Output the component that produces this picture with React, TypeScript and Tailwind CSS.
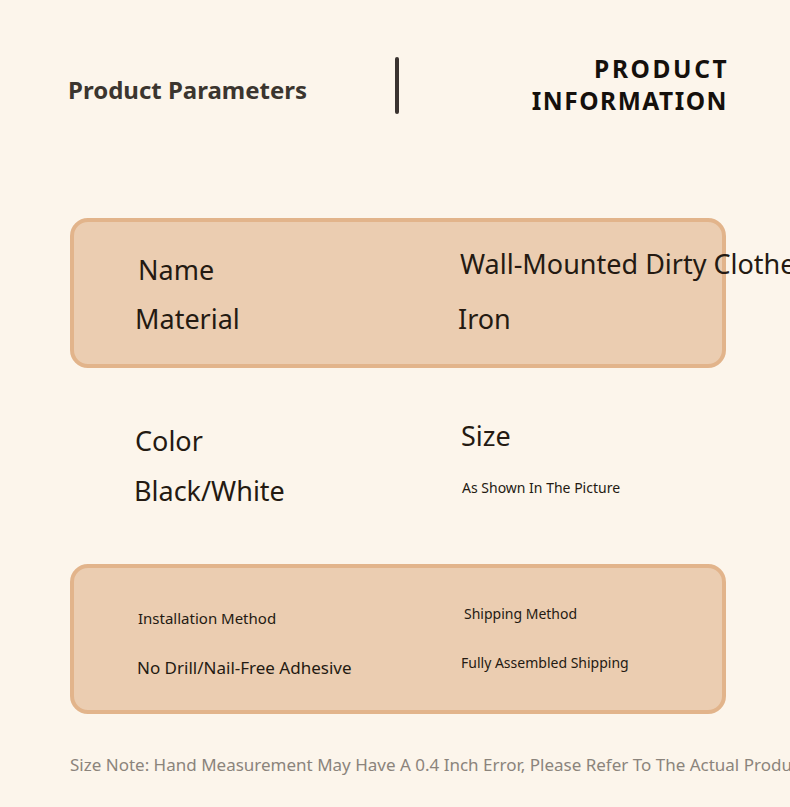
export default function App() {
  return (
    <div
      className="w-[790px] h-[807px] overflow-hidden bg-[#fcf5eb] text-[#241a12]"
      style={{ fontFamily: '"Noto Sans", "Open Sans", sans-serif' }}
    >
      {/* header */}
      <header className="flex items-center h-[170px] pl-[68px] pr-[62px]">
        <div className="flex items-center w-full">
          <h1 className="w-[327px] text-[24px] font-bold text-[#3b352f] mt-[10px]">
            Product Parameters
          </h1>
          <div className="w-[4px] h-[57px] rounded-full bg-[#3a3330]" />
          <div className="flex-1 flex flex-col items-end text-[24.5px] leading-[32px] font-bold text-[#15100c]">
            <div className="tracking-[2.6px] -mr-[1.3px]">PRODUCT</div>
            <div className="tracking-[1.5px]">INFORMATION</div>
          </div>
        </div>
      </header>

      <main className="px-[70px] mt-[48px]">
        {/* name + material card */}
        <section className="w-[656px] h-[150px] rounded-[18px] border-[4px] border-[#e2b48b] bg-[#ebcdb1] pt-[23px]">
          <div className="grid grid-cols-[386px_1fr] text-[27px]">
            <div className="h-[50px] flex items-center pl-[64px]">Name</div>
            <div className="h-[50px] flex items-center whitespace-nowrap -mt-[6px]">
              Wall-Mounted Dirty Clothes Basket
            </div>
            <div className="h-[50px] flex items-center pl-[61px] -mt-[1px]">Material</div>
            <div className="h-[50px] flex items-center -ml-[2px] -mt-[1px]">Iron</div>
          </div>
        </section>

        {/* color + size */}
        <section className="w-[656px] pt-[48px] h-[196px]">
          <div className="grid grid-cols-[390px_1fr] text-[27px]">
            <div className="h-[50px] flex items-center pl-[65px]">Color</div>
            <div className="h-[50px] flex items-center -mt-[5px] pl-[1px]">Size</div>
            <div className="h-[50px] flex items-center pl-[64px]">Black/White</div>
            <div className="h-[50px] flex items-center text-[14px] -mt-[4px] pl-[2px]">
              As Shown In The Picture
            </div>
          </div>
        </section>

        {/* installation + shipping card */}
        <section className="w-[656px] h-[150px] rounded-[18px] border-[4px] border-[#e2b48b] bg-[#ebcdb1] pt-[25px]">
          <div className="grid grid-cols-[386px_1fr]">
            <div className="h-[50px] flex items-center pl-[64px] text-[15px]">Installation Method</div>
            <div className="h-[50px] flex items-center pl-[4px] text-[14px] -mt-[5px]">
              Shipping Method
            </div>
            <div className="h-[50px] flex items-center pl-[63px] text-[17px]">No Drill/Nail-Free Adhesive</div>
            <div className="h-[50px] flex items-center pl-[1px] text-[14px] -mt-[6px]">
              Fully Assembled Shipping
            </div>
          </div>
        </section>

        <p className="mt-[38px] text-[17px] text-[#8b847c] whitespace-nowrap">
          Size Note: Hand Measurement May Have A 0.4 Inch Error, Please Refer To The Actual Product
        </p>
      </main>
    </div>
  );
}
